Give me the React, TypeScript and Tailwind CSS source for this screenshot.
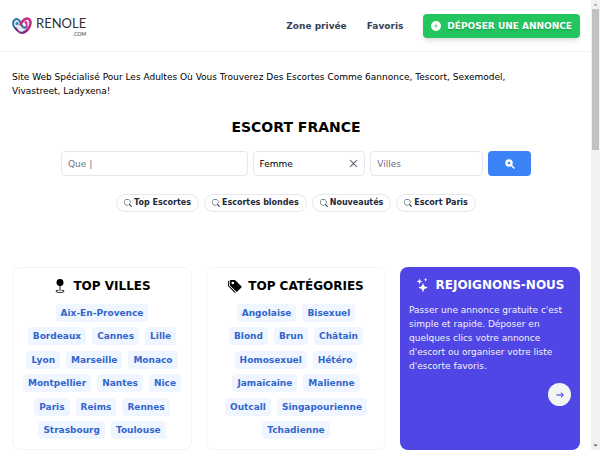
import type { ReactNode } from "react";
import { BsArrowRight, BsGeoFill, BsPlusCircleFill, BsSearch, BsStars, BsTagsFill, BsXLg } from "react-icons/bs";

const shortcuts = ["Top Escortes", "Escortes blondes", "Nouveautés", "Escort Paris"];

const cities = [
  ["Aix-En-Provence"],
  ["Bordeaux", "Cannes", "Lille"],
  ["Lyon", "Marseille", "Monaco"],
  ["Montpellier", "Nantes", "Nice"],
  ["Paris", "Reims", "Rennes"],
  ["Strasbourg", "Toulouse"],
];

const categories = [
  ["Angolaise", "Bisexuel"],
  ["Blond", "Brun", "Châtain"],
  ["Homosexuel", "Hétéro"],
  ["Jamaïcaine", "Malienne"],
  ["Outcall", "Singapourienne"],
  ["Tchadienne"],
];

function Logo() {
  return (
    <a href="#" aria-label="Renole.com" className="flex items-center gap-1 text-[#303036]">
      <svg viewBox="0 0 40 36" className="h-[18px] w-5" fill="none" strokeLinecap="round" strokeLinejoin="round">
        <path d="M4 5C9 0 15 5 18 14L22 21C27 24 30 19 29 10L33 6L36 14C34 23 27 31 20 31C12 31 2 18 4 5Z" fill="#e3e6f3" />
        <path d="M10 26C3 20 0 12 4 7C8 2 13 4 16 9C19 16 21 23 26 21" stroke="#1f70a4" strokeWidth="4" />
        <path d="M23 31C30 29 36 21 37 13C38 5 32 1 27 4C22 6 19 11 17 15" stroke="#c72d86" strokeWidth="5" />
        <path d="M7 22C10 27 15 32 21 32C24 32 27 29 30 26" stroke="#7a3283" strokeWidth="4" />
        <path d="M29 16V21" stroke="#b43388" strokeWidth="4" />
        <circle cx="10" cy="13" r="3" fill="#2388b5" />
        <circle cx="28" cy="11" r="3" fill="#d82d86" />
      </svg>
      <span className="flex flex-col items-end font-['Lato',sans-serif]">
        <span className="text-[13px] leading-4">RENOLE</span>
        <span className="text-[5px] leading-[6px]">.COM</span>
      </span>
    </a>
  );
}

function LinkCard({ title, icon, rows }: { title: string; icon: ReactNode; rows: string[][] }) {
  return (
    <section className="flex min-h-[183px] flex-col rounded-lg border border-gray-100 px-2 pt-2 pb-2.5">
      <h2 className="flex items-center justify-center gap-1.5 text-[12px] leading-5 font-bold">
        {icon}
        {title}
      </h2>
      <div className="mt-2 flex flex-1 flex-col justify-between">
        {rows.map((row) => (
          <div key={row[0]} className="flex justify-center gap-1.5">
            {row.map((item) => (
              <a key={item} href="#" className="rounded bg-[#f0f6ff] px-[5px] text-[9px] leading-[18px] font-bold text-[#3366cc]">
                {item}
              </a>
            ))}
          </div>
        ))}
      </div>
    </section>
  );
}

export default function App() {
  return (
    <div className="flex min-h-screen bg-white font-['DejaVu_Sans',sans-serif] text-[9px] leading-[14px] text-black">
      <div className="min-w-0 flex-1">
        <header className="flex h-[52px] items-center justify-between border-b border-gray-100 pr-[11px] pl-3">
          <Logo />
          <nav className="flex items-center gap-5 font-bold text-gray-700">
            <a href="#">Zone privée</a>
            <a href="#">Favoris</a>
            <button type="button" className="flex h-6 items-center gap-1.5 rounded bg-[#22c55e] px-2 font-bold text-white shadow-md text-shadow-sm">
              <BsPlusCircleFill className="size-2.5" />
              DÉPOSER UNE ANNONCE
            </button>
          </nav>
        </header>
        <main className="pt-[18px] pr-[11px] pl-3">
          <p className="pr-8">
            Site Web Spécialisé Pour Les Adultes Où Vous Trouverez Des Escortes Comme 6annonce, Tescort, Sexemodel,
            Vivastreet, Ladyxena!
          </p>
          <h1 className="mt-[19px] text-center text-[14px] leading-5 font-bold">ESCORT FRANCE</h1>
          <form className="mx-[49px] mt-3.5 grid h-[25px] grid-cols-[187fr_113fr_113fr_43px] gap-[5px]">
            <input aria-label="Que" placeholder="Que |" className="min-w-0 rounded border border-gray-200 px-1.5 placeholder:text-gray-500" />
            <div className="flex min-w-0 items-center rounded border border-gray-200 px-1.5">
              <input aria-label="Genre" defaultValue="Femme" className="min-w-0 flex-1" />
              <button type="button" aria-label="Effacer" className="text-gray-600">
                <BsXLg className="size-[9px]" strokeWidth="1" />
              </button>
            </div>
            <input aria-label="Villes" placeholder="Villes" className="min-w-0 rounded border border-gray-200 px-1.5 placeholder:text-gray-500" />
            <button type="submit" aria-label="Rechercher" className="flex items-center justify-center rounded bg-[#3b82f6] text-white">
              <svg viewBox="0 0 20 20" className="size-2.5" fill="none" stroke="currentColor">
                <circle cx="8" cy="8" r="5" strokeWidth="5" />
                <path d="M13 13L18 18" strokeWidth="3" strokeLinecap="round" />
              </svg>
            </button>
          </form>
          <div className="mt-[18px] flex justify-center gap-[5px]">
            {shortcuts.map((label) => (
              <a key={label} href="#" className="flex h-[18px] items-center gap-0.5 rounded-full border border-gray-200 px-[7px] text-[8px] font-bold text-gray-800">
                <BsSearch className="size-2" />
                {label}
              </a>
            ))}
          </div>
          <div className="mt-[55px] grid grid-cols-3 gap-3.5">
            <LinkCard title="TOP VILLES" icon={<BsGeoFill className="size-3.5" />} rows={cities} />
            <LinkCard title="TOP CATÉGORIES" icon={<BsTagsFill className="size-3.5" />} rows={categories} />
            <section className="rounded-lg bg-[#4f46e5] px-[9px] pt-2 text-gray-100">
              <h2 className="flex items-center justify-center gap-1.5 text-[12px] leading-5 font-bold text-white">
                <BsStars className="size-3.5" />
                REJOIGNONS-NOUS
              </h2>
              <p className="mt-2">
                Passer une annonce gratuite c'est simple et rapide. Déposer en quelques clics votre annonce d'escort ou
                organiser votre liste d'escorte favoris.
              </p>
              <div className="mt-2.5 flex justify-end">
                <button type="button" aria-label="Continuer" className="flex size-[23px] items-center justify-center rounded-full bg-gray-100 text-[#4f46e5]">
                  <BsArrowRight className="size-2" strokeWidth="1" />
                </button>
              </div>
            </section>
          </div>
        </main>
      </div>
      <div aria-hidden="true" className="flex w-[9px] flex-col items-center justify-between bg-[#f1f1f1]">
        <div className="flex w-full flex-col items-center">
          <svg viewBox="0 0 9 9" className="size-[9px]"><path d="M2.5 5.5H6.5L4.5 3.5Z" fill="#999" /></svg>
          <div className="h-[141px] w-[7px] bg-[#c1c1c1]" />
        </div>
        <svg viewBox="0 0 9 9" className="size-[9px]"><path d="M2.5 3.5H6.5L4.5 5.5Z" fill="#505050" /></svg>
      </div>
    </div>
  );
}
